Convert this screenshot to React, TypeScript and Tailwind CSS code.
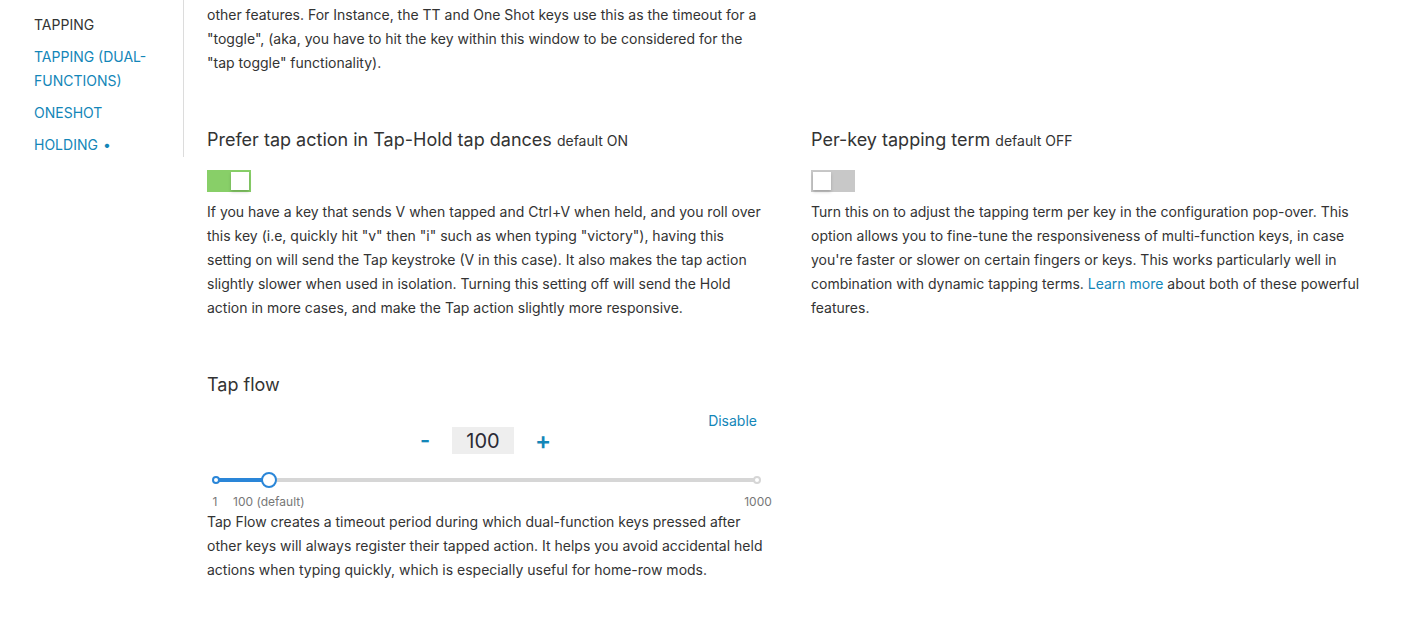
import React from "react";

const font = { fontFamily: "Inter, 'Noto Sans', sans-serif" };

const navItems = [
  { label: "TAPPING", active: true },
  { label: "TAPPING (DUAL-FUNCTIONS)" },
  { label: "ONESHOT" },
  { label: "HOLDING", dot: true },
];

const Toggle = ({ on }: { on: boolean }) => (
  <div
    className={`flex h-[22px] w-[44px] p-[2px] ${on ? "justify-end bg-[#88cf68]" : "justify-start bg-[#c8c8c8]"}`}
  >
    <div className="h-[18px] w-[18px] bg-white shadow-[0_2px_3px_rgba(0,0,0,0.18)]" />
  </div>
);

const marks = [
  { value: 1, label: "1" },
  { value: 100, label: "100 (default)" },
  { value: 1000, label: "1000" },
];
const min = 1;
const max = 1000;
const current = 100;
const pct = (v: number) => ((v - min) / (max - min)) * 100;

const Slider = () => (
  <div className="ml-[8px] mr-[5px] mt-[18px]">
    <div className="relative h-[16px]">
      <div className="absolute left-0 right-0 top-[6px] h-[4px] rounded-full bg-[#d6d6d6]" />
      <div
        className="absolute left-0 top-[6px] h-[4px] rounded-full bg-[#2a86d8]"
        style={{ width: `${pct(current)}%` }}
      />
      <div className="absolute left-[-3px] top-[4px] h-[8px] w-[8px] rounded-full border-2 border-[#2a86d8] bg-white" />
      <div className="absolute right-[-3px] top-[4px] h-[8px] w-[8px] rounded-full border-2 border-[#d6d6d6] bg-white" />
      <div
        className="absolute top-0 h-[16px] w-[16px] -translate-x-1/2 rounded-full border-2 border-[#2a86d8] bg-white"
        style={{ left: `${pct(current)}%` }}
      />
    </div>
    <div className="relative mt-[6px] h-[16px] text-[12px] leading-[16px] text-[#777]">
      {marks.map((m) => (
        <span
          key={m.value}
          className="absolute top-0 -translate-x-1/2 whitespace-nowrap"
          style={{ left: `${pct(m.value)}%` }}
        >
          {m.label}
        </span>
      ))}
    </div>
  </div>
);

export default function App() {
  return (
    <div className="flex min-h-[628px] bg-white text-[14px] leading-[24px] text-[#333]" style={font}>
      <aside className="w-[184px] shrink-0 self-start border-r border-[#dcdcdc] pb-0 pl-[34px] pr-[20px] pt-[13px]">
        <ul className="flex flex-col gap-[8px]">
          {navItems.map((item) => (
            <li key={item.label} className={item.active ? "text-[#333]" : "text-[#1386b8]"}>
              {item.label}
              {item.dot && <span className="ml-[5px]">•</span>}
            </li>
          ))}
        </ul>
      </aside>

      <main className="flex-1 pl-[23px] pr-[44px] pt-[3px]">
        <p className="w-[556px]">
          other features. For Instance, the TT and One Shot keys use this as the timeout for a "toggle", (aka, you
          have to hit the key within this window to be considered for the "tap toggle" functionality).
        </p>

        <div className="mt-[52px] grid grid-cols-2 gap-x-[48px]">
          <section>
            <h3 className="text-[18px] leading-[26px]">
              Prefer tap action in Tap-Hold tap dances <span className="text-[14px]">default ON</span>
            </h3>
            <div className="mt-[16px]">
              <Toggle on />
            </div>
            <p className="mt-[8px]">
              If you have a key that sends V when tapped and Ctrl+V when held, and you roll over this key (i.e, quickly
              hit "v" then "i" such as when typing "victory"), having this setting on will send the Tap keystroke (V in
              this case). It also makes the tap action slightly slower when used in isolation. Turning this setting off
              will send the Hold action in more cases, and make the Tap action slightly more responsive.
            </p>
          </section>

          <section>
            <h3 className="text-[18px] leading-[26px]">
              Per-key tapping term <span className="text-[14px]">default OFF</span>
            </h3>
            <div className="mt-[16px]">
              <Toggle on={false} />
            </div>
            <p className="mt-[8px]">
              Turn this on to adjust the tapping term per key in the configuration pop-over. This option allows you to
              fine-tune the responsiveness of multi-function keys, in case you're faster or slower on certain fingers
              or keys. This works particularly well in combination with dynamic tapping terms.{" "}
              <a className="text-[#1386b8]">Learn more</a> about both of these powerful features.
            </p>
          </section>

          <section className="mt-[52px]">
            <h3 className="text-[18px] leading-[26px]">Tap flow</h3>
            <div className="mt-[13px] flex justify-end pr-[6px]">
              <a className="leading-[20px] text-[#1386b8]">Disable</a>
            </div>
            <div className="-mt-[4px] flex items-center justify-center gap-[21px] pr-[2px]">
              <button className="w-[12px] text-[22px] font-semibold leading-[27px] text-[#1386b8]">-</button>
              <div className="flex h-[27px] w-[62px] items-center justify-center bg-[#eeeeee] text-[20px] text-[#2a2a35]">
                100
              </div>
              <button className="w-[14px] text-[24px] font-semibold leading-[27px] text-[#1386b8]">+</button>
            </div>
            <Slider />
            <p className="mt-0">
              Tap Flow creates a timeout period during which dual-function keys pressed after other keys will always
              register their tapped action. It helps you avoid accidental held actions when typing quickly, which is
              especially useful for home-row mods.
            </p>
          </section>
        </div>
      </main>
    </div>
  );
}
